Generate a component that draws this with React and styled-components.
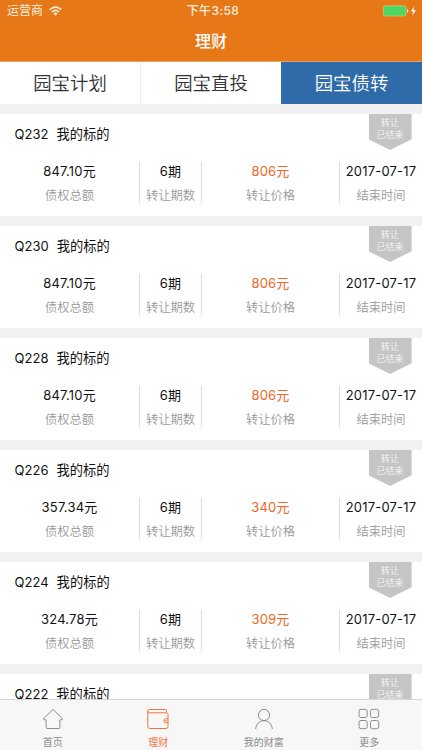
import React from "react";
import styled, { createGlobalStyle } from "styled-components";

const GlobalStyle = createGlobalStyle`
* {
  box-sizing: border-box;
}
body {
  margin: 0;
  background: #f1f1f1;
  font-family: Inter, "Noto Sans CJK SC", sans-serif;
  overflow: hidden;
}
`;

const Screen = styled.div`
  display: flex;
  flex-direction: column;
  height: 750px;
  width: 422px;
  overflow: hidden;
  background: #f1f1f1;
`;

const Header = styled.header`
  height: 62px;
  flex: none;
  background: #e77817;
  border-bottom: 1px solid #e5a268;
  color: #fff;
`;

const StatusBar = styled.div`
  display: grid;
  grid-template-columns: 1fr auto 1fr;
  align-items: center;
  height: 22px;
  padding: 0 5px 0 7px;
  color: #fdeee0;
  font-size: 12px;
  line-height: 22px;
`;

const Carrier = styled.div`
  display: flex;
  align-items: center;
  gap: 6px;
`;

const Clock = styled.div`
  padding-left: 2px;
  font-weight: 500;
  letter-spacing: 0.4px;
`;

const Power = styled.div`
  display: flex;
  justify-content: flex-end;
`;

const Title = styled.h1`
  margin: 0;
  font-size: 16px;
  font-weight: 500;
  line-height: 38px;
  text-align: center;
`;

const Tabs = styled.div`
  display: grid;
  grid-template-columns: 141px 140px 141px;
  flex: none;
  height: 42px;
`;

const Tab = styled.div`
  background: ${(props) => (props.$active ? "#2f6aa9" : "#fff")};
  color: ${(props) => (props.$active ? "#fff" : "#333")};
  border-right: ${(props) => (props.$line ? "1px solid #eee" : "none")};
  font-size: 18.4px;
  font-weight: 350;
  line-height: 42px;
  text-align: center;
`;

const List = styled.main`
  flex: 1;
  min-height: 0;
  overflow: hidden;
  display: flex;
  flex-direction: column;
  gap: 10px;
  padding-top: 10px;
`;

const Card = styled.section`
  flex: none;
  height: 102px;
  background: #fff;
`;

const CardTop = styled.div`
  display: flex;
  justify-content: space-between;
  height: 48px;
  padding: 0 10.4px 0 14.6px;
`;

const Name = styled.div`
  display: flex;
  gap: 8px;
  color: #111;
  font-size: 13.3px;
  line-height: 40px;
`;

const Code = styled.span`
  font-size: 13px;
`;

const Ribbon = styled.div`
  width: 43px;
  height: 36px;
  padding-top: 3px;
  background: #c5c5c5;
  clip-path: polygon(0 0, 100% 0, 100% 70%, 50% 100%, 0 70%);
  color: #f7f7f7;
  font-size: 9px;
  font-weight: 350;
  line-height: 11.5px;
  text-align: center;
`;

const Facts = styled.div`
  display: grid;
  grid-template-columns: 139px 62px 138px 83px;
  grid-template-rows: 41px;
`;

const Fact = styled.div`
  border-left: ${(props) => (props.$line ? "1px solid #ddd" : "none")};
  text-align: center;
  white-space: nowrap;
`;

const Value = styled.div`
  color: ${(props) => (props.$price ? "#ee6526" : "#111")};
  font-size: 13px;
  letter-spacing: 0.2px;
  line-height: 18px;
`;

const Label = styled.div`
  color: #999;
  font-size: 12.3px;
  font-weight: 350;
  line-height: 20px;
  padding-top: 6px;
`;

const NavBar = styled.nav`
  display: flex;
  flex: none;
  height: 51px;
  background: #f7f7f7;
  border-top: 1px solid #d5d5d5;
`;

const NavItem = styled.div`
  flex: 1;
  display: flex;
  flex-direction: column;
  align-items: center;
  padding-top: 8px;
  color: ${(props) => (props.$active ? "#ee7640" : "#8c8c8c")};
  font-size: 10px;
  line-height: 14px;

  svg {
    display: block;
    margin-bottom: 5px;
  }
`;

const Icon = ({ children }) => (
  <svg width="22" height="22" viewBox="0 0 22 22" fill="none" stroke="currentColor" strokeWidth="1">
    {children}
  </svg>
);

const HomeIcon = () => (
  <Icon>
    <path d="M11 1.4 L1.3 11 Q1.4 11.9 4.1 11.9 V19.5 Q4.1 20.5 5.1 20.5 H16.9 Q17.9 20.5 17.9 19.5 V11.9 Q20.6 11.9 20.7 11 Z" />
  </Icon>
);

const WalletIcon = () => (
  <Icon>
    <path d="M19.5 4.5V2.5Q19.5 1.5 18.5 1.5H2.5Q.8 1.5.8 3V18.5Q.8 20.5 2.8 20.5H19.2Q21 20.5 21 18.5V6.3Q21 4.8 19.5 4.8H2.5Q.8 4.8.8 3" />
    <path d="M21 10.8H18.8A2 2 0 0 0 18.8 14.8H21" />
    <circle cx="19" cy="12.8" r=".5" />
  </Icon>
);

const PersonIcon = () => (
  <Icon>
    <circle cx="11" cy="7" r="5.6" />
    <path d="M2.7 21C3 15.8 6.5 12.7 11 12.7S19 15.8 19.3 21" />
  </Icon>
);

const MoreIcon = () => (
  <Icon>
    <rect x="1" y="1.3" width="8.2" height="8.2" rx="2" />
    <rect x="12.5" y="1.3" width="8.2" height="8.2" rx="2" />
    <rect x="1" y="12.5" width="8.2" height="8.2" rx="2" />
    <rect x="12.5" y="12.5" width="8.2" height="8.2" rx="2" />
  </Icon>
);

const Wifi = () => (
  <svg width="13" height="10" viewBox="0 0 13 10" fill="none" stroke="currentColor" strokeWidth="1.6">
    <path d="M.7 3.6Q6.5-1.4 12.3 3.6M2.9 6Q6.5 2.9 10.1 6" />
    <path d="M4.4 7.4Q6.5 5.7 8.6 7.4L6.5 9.7Z" fill="currentColor" stroke="none" />
  </svg>
);

const Battery = () => (
  <svg width="34" height="12" viewBox="0 0 34 12">
    <rect x=".5" y=".8" width="22.5" height="10.2" rx="1.5" fill="#4cd763" stroke="#d9bd7c" strokeWidth=".8" />
    <path d="M24 4Q25.3 4.4 25.3 6T24 8Z" fill="#fbe3cb" />
    <path d="M31.2 1.2L28 6.5H30.2L29.2 10.8L33 5.3H30.7Z" fill="#fff" />
  </svg>
);

const items = [
  { code: "Q232", total: "847.10", price: "806" },
  { code: "Q230", total: "847.10", price: "806" },
  { code: "Q228", total: "847.10", price: "806" },
  { code: "Q226", total: "357.34", price: "340" },
  { code: "Q224", total: "324.78", price: "309" },
  { code: "Q222" },
];

const Transfer = ({ code, total, price }) => (
  <Card>
    <CardTop>
      <Name>
        <Code>{code}</Code>
        <span>我的标的</span>
      </Name>
      <Ribbon>
        转让
        <br />
        已结束
      </Ribbon>
    </CardTop>
    {total && (
      <Facts>
        <Fact>
          <Value>{total}元</Value>
          <Label>债权总额</Label>
        </Fact>
        <Fact $line>
          <Value>6期</Value>
          <Label>转让期数</Label>
        </Fact>
        <Fact $line>
          <Value $price>{price}元</Value>
          <Label>转让价格</Label>
        </Fact>
        <Fact $line>
          <Value>2017-07-17</Value>
          <Label>结束时间</Label>
        </Fact>
      </Facts>
    )}
  </Card>
);

const App = () => {
  return (
    <Screen>
      <GlobalStyle />
      <Header>
        <StatusBar>
          <Carrier>
            运营商
            <Wifi />
          </Carrier>
          <Clock>下午3:58</Clock>
          <Power>
            <Battery />
          </Power>
        </StatusBar>
        <Title>理财</Title>
      </Header>
      <Tabs>
        <Tab $line>园宝计划</Tab>
        <Tab>园宝直投</Tab>
        <Tab $active>园宝债转</Tab>
      </Tabs>
      <List>
        {items.map((item) => (
          <Transfer key={item.code} {...item} />
        ))}
      </List>
      <NavBar>
        <NavItem>
          <HomeIcon />
          首页
        </NavItem>
        <NavItem $active>
          <WalletIcon />
          理财
        </NavItem>
        <NavItem>
          <PersonIcon />
          我的财富
        </NavItem>
        <NavItem>
          <MoreIcon />
          更多
        </NavItem>
      </NavBar>
    </Screen>
  );
};

export default App;
